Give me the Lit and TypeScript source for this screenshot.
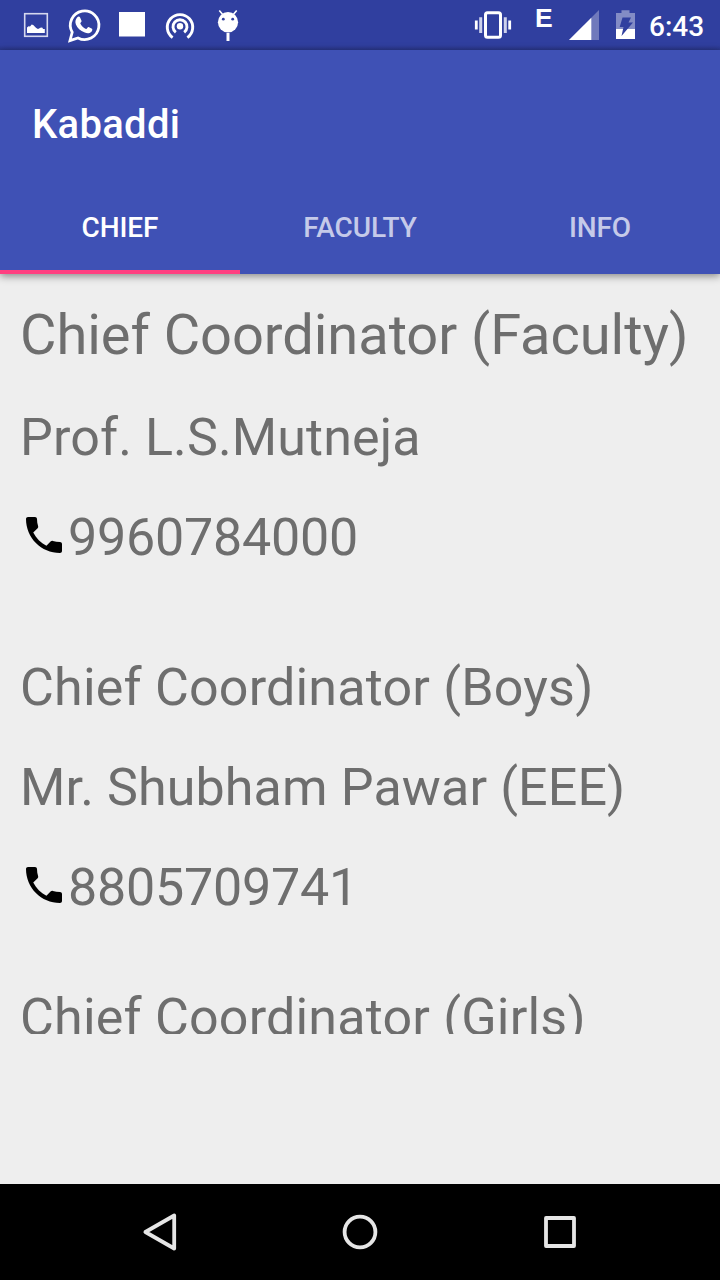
import { LitElement, html, css, svg } from "lit";
import { customElement, property } from "lit/decorators.js";

@customElement("status-bar")
class StatusBar extends LitElement {
  static styles = css`
    :host {
      display: flex;
      height: 50px;
      background: linear-gradient(#303f9f 0 45px, #2a378c 50px);
      color: #fff;
      padding-left: 12px;
      box-sizing: border-box;
    }
    svg { display: block; flex: none; }
    .spacer { flex: 1; }
    .network {
      box-sizing: border-box;
      width: 50px;
      padding-left: 21px;
      font: 700 26.5px/37px "Liberation Sans", Arial, sans-serif;
    }
    .clock {
      width: 71px;
      font: 500 28px/53px Roboto, sans-serif;
      white-space: nowrap;
    }
  `;
  render() {
    return html`
      <svg width="48" height="50" viewBox="0 0 48 50">
        <rect x="12.700" y="13.700" width="22.600" height="22.600" fill="none" stroke="#d5d8ee" stroke-width="1.600" />
        <path d="M15 33v-5.500l1.500-1.300 1.500.3 1.700-2 1.500.5 3 3 1.800 1 3-1.500 1.500.2.500 1.300h1.800V33z" fill="#fff" />
      </svg>
      <svg width="48" height="50" viewBox="0 0 48 50">
        <path d="M10 40.500l2.200-8.200A14.300 14.300 0 1 1 18 37.900z" fill="none" stroke="#fff" stroke-width="2.800" />
        <path d="M17.300 17.200c1-1 2.300-.8 2.800.2l1.500 3.500c.3.700-1.500 2-1.300 2.600 1.300 2.500 3 4.200 5.700 5.500.8.300 1.800-2.200 2.600-1.900l3.400 1.600c.7.400.2 2.500-.8 3.300-1.700 1.500-4 1.500-6.400.6-4.600-1.700-7.500-4.700-8.900-8.100-1-2.700-.6-5.200 1.400-7.300z" fill="#fff" />
      </svg>
      <svg width="48" height="50" viewBox="0 0 48 50">
        <rect x="11" y="12" width="26" height="24.500" fill="#fff" />
      </svg>
      <svg width="48" height="50" viewBox="0 0 48 50">
        <g fill="none" stroke="#fff" stroke-width="2.900">
          <path d="M16.600 37.600A12.700 12.700 0 1 1 31.400 37.600" />
          <path d="M19.800 32.300A7 7 0 1 1 28.200 32.300" />
        </g>
        <circle cx="24" cy="26.200" r="3.200" fill="#fff" />
      </svg>
      <svg width="48" height="50" viewBox="0 0 48 50">
        <path d="M15.300 10.500l3.200 3.700M32.700 10.500l-3.200 3.700" stroke="#fff" stroke-width="1.600" fill="none" />
        <path d="M24 33v8" stroke="#fff" stroke-width="3" />
        <ellipse cx="24" cy="22.200" rx="10.100" ry="10.300" fill="#fff" />
        <circle cx="19.300" cy="19.200" r="1.400" fill="#303f9f" />
        <circle cx="28.700" cy="19.200" r="1.400" fill="#303f9f" />
      </svg>
      <span class="spacer"></span>
      <svg width="44" height="50" viewBox="470 0 44 50">
        <rect x="485.500" y="12.700" width="15" height="24.600" rx="2" fill="none" stroke="#fff" stroke-width="3" />
        <path d="M480.700 17.300v15.700M505.300 17.300v15.700" stroke="#cdd1eb" stroke-width="3" />
        <path d="M476.300 20.500v9M509.700 20.500v9" stroke="#fff" stroke-width="2.800" />
      </svg>
      <span class="network">E</span>
      <svg width="42" height="50" viewBox="564 0 42 50">
        <path d="M569 40L599 10V40z" fill="#7079bc" />
        <path d="M569 40L591.300 17.700V40z" fill="#fff" />
      </svg>
      <svg width="43" height="50" viewBox="606 0 43 50">
        <path d="M616 13h5.500v-2.800h8V13h5.500v26h-19z" fill="#838cc5" />
        <path d="M616 29h19v10h-19z" fill="#fff" />
        <path d="M622.500 17.500h8.500l-2.500 5h4.500L621.500 36l2-9h-3.800z" fill="#303f9f" />
      </svg>
      <span class="clock">6:43</span>
    `;
  }
}

@customElement("tab-header")
class TabHeader extends LitElement {
  @property({ type: Number }) active = 0;
  static styles = css`
    :host {
      display: block;
      height: 224px;
      background: #3f51b5;
      color: #fff;
      box-shadow: 0 2px 8px rgba(0, 0, 0, 0.45);
      font-family: Roboto, sans-serif;
      font-weight: 500;
    }
    .title { height: 128px; padding: 0 32px; font-size: 40px; line-height: 150px; letter-spacing: 0.3px; }
    .tabs { display: grid; grid-template-columns: repeat(3, 1fr); height: 96px; }
    .tab {
      box-sizing: border-box;
      height: 96px;
      text-align: center;
      font-size: 28px;
      line-height: 100px;
      letter-spacing: -0.08px;
      color: #c5cae9;
      border-bottom: 4px solid transparent;
    }
    .tab.active { color: #fff; border-color: #ff4081; }
  `;
  render() {
    return html`
      <div class="title">Kabaddi</div>
      <div class="tabs">
        ${["CHIEF", "FACULTY", "INFO"].map(
          (t, i) => html`<div class="tab ${i === this.active ? "active" : ""}">${t}</div>`
        )}
      </div>
    `;
  }
}

const phoneIcon = svg`<path d="M6.620 10.790c1.440 2.830 3.760 5.140 6.590 6.590l2.200-2.200c.27-.27.67-.36 1.020-.24 1.120.37 2.330.57 3.570.57.55 0 1 .45 1 1V20c0 .55-.45 1-1 1-9.390 0-17-7.610-17-17 0-.55.45-1 1-1h3.500c.55 0 1 .45 1 1 0 1.250.2 2.450.57 3.570.11.35.03.74-.25 1.020l-2.200 2.200z" />`;

@customElement("contact-list")
class ContactList extends LitElement {
  static styles = css`
    :host {
      display: block;
      height: 760px;
      overflow: hidden;
      padding: 11px 20px 0;
      box-sizing: border-box;
      color: #6e6e6e;
      font-family: Roboto, sans-serif;
      font-size: 52px;
    }
    .row { display: flex; height: 100px; line-height: 100px; white-space: nowrap; letter-spacing: 0.2px; }
    .name { letter-spacing: 0.12px; }
    .lead { font-size: 56px; height: 103px; letter-spacing: -0.05px; }
    .phone { margin-bottom: 50px; letter-spacing: -0.22px; }
    .phone.tight { margin-bottom: 30px; }
    svg { width: 48px; height: 48px; margin-top: 23px; fill: #000; flex: none; }
  `;
  private phone(n: string, tight = false) {
    return html`<div class="row phone ${tight ? "tight" : ""}">
      <svg viewBox="0 0 24 24">${phoneIcon}</svg><span>${n}</span>
    </div>`;
  }
  render() {
    return html`
      <div class="row lead">Chief Coordinator (Faculty)</div>
      <div class="row name">Prof. L.S.Mutneja</div>
      ${this.phone("9960784000")}
      <div class="row">Chief Coordinator (Boys)</div>
      <div class="row name">Mr. Shubham Pawar (EEE)</div>
      ${this.phone("8805709741", true)}
      <div class="row">Chief Coordinator (Girls)</div>
    `;
  }
}

@customElement("nav-bar")
class NavBar extends LitElement {
  static styles = css`
    :host {
      display: flex;
      justify-content: center;
      gap: 104px;
      height: 96px;
      background: #000;
    }
    svg { width: 96px; height: 96px; fill: none; stroke: #e6e6e6; stroke-width: 3.8; stroke-linejoin: round; }
  `;
  render() {
    return html`
      <svg viewBox="0 0 96 96"><path d="M33.400 48L62.200 31.500V64.500z" /></svg>
      <svg viewBox="0 0 96 96"><circle cx="48" cy="48" r="15.400" /></svg>
      <svg viewBox="0 0 96 96"><rect x="34" y="34" width="28" height="28" /></svg>
    `;
  }
}

@customElement("app-root")
class AppRoot extends LitElement {
  static styles = css`
    :host {
      display: flex;
      flex-direction: column;
      width: 720px;
      height: 1280px;
      background: #eeeeee;
      overflow: hidden;
    }
    status-bar, tab-header, contact-list, nav-bar { flex: none; }
    .spacer { flex: 1; }
  `;
  render() {
    return html`
      <status-bar></status-bar>
      <tab-header></tab-header>
      <contact-list></contact-list>
      <div class="spacer"></div>
      <nav-bar></nav-bar>
    `;
  }
}
